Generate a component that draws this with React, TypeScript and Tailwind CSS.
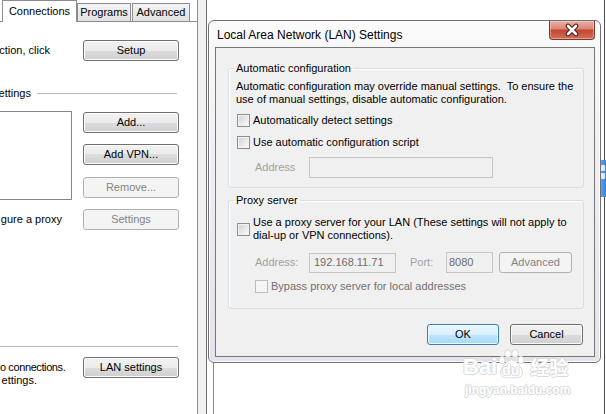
import React from 'react';

// Win7-ish button looks
const btnBase = 'flex items-center justify-center h-[21px] rounded-[3px] border text-[11px] leading-none shrink-0';
const btnOn =
  'border-[#707070] text-black bg-[linear-gradient(#f2f2f2,#ebebeb_50%,#dddddd_50%,#cfcfcf)] shadow-[inset_0_0_0_1px_#fbfbfb]';
const btnOff = 'border-[#adb2b5] text-[#838383] bg-[#f4f4f4]';
const btnDefault =
  'border-[#3c7fb1] text-black bg-[linear-gradient(#eaf6fd,#d9f0fc_50%,#bee6fd_50%,#a7d9f5)] shadow-[inset_0_0_0_1px_#eef8fd]';

const Button: React.FC<{ label: string; kind?: 'on' | 'off' | 'default'; className?: string }> = ({
  label,
  kind = 'on',
  className = '',
}) => {
  const look = kind === 'off' ? btnOff : kind === 'default' ? btnDefault : btnOn;
  return <div className={`${btnBase} ${look} ${className}`}>{label}</div>;
};

const Check: React.FC<{ off?: boolean }> = ({ off }) => (
  <span
    className={
      off
        ? 'block w-[13px] h-[13px] shrink-0 border border-[#bcbcbc] bg-[#f5f5f5]'
        : 'block w-[13px] h-[13px] shrink-0 border border-[#8e8f8f] bg-[linear-gradient(135deg,#d0d0d0,#fdfdfd)] shadow-[inset_0_0_0_1px_#f2f2f2]'
    }
  />
);

const App: React.FC = () => {
  return (
    <div className="relative w-[606px] h-[414px] overflow-hidden bg-white font-['Liberation_Sans',Arial,sans-serif] text-[11px] leading-[13px] text-black">
      {/* background windows */}
      <div className="flex h-full">
        {/* Internet Options (only the right part shows) */}
        <div className="w-[198px] h-full flex flex-col border-r border-[#898c95] bg-white">
          <div className="h-[21px] flex items-end shrink-0">
            <div className="ml-[2px] w-[75px] h-[22px] -mb-px relative z-10 bg-white border-x border-t border-[#898c95] flex items-center justify-center">
              Connections
            </div>
            <div className="w-[54px] h-[18px] border-x border-t border-[#898c95] bg-[linear-gradient(#f4f4f4,#e2e2e2)] flex items-center justify-center">
              Programs
            </div>
            <div className="ml-[1px] w-[58px] h-[18px] border-x border-t border-[#898c95] bg-[linear-gradient(#f4f4f4,#e2e2e2)] flex items-center justify-center">
              Advanced
            </div>
          </div>

          <div className="flex-1 border-t border-[#898c95] flex flex-col">
            <div className="mt-[18px] flex items-center h-[21px]">
              <div className="w-[83px] shrink-0">
                <div className="w-[50px] flex justify-end whitespace-nowrap">ction, click</div>
              </div>
              <Button label="Setup" className="w-[96px]" />
            </div>

            <div className="mt-[25px] h-[14px] flex items-center">
              <div className="w-[31px] flex justify-end whitespace-nowrap">ettings</div>
              <div className="ml-[6px] w-[140px] h-px bg-[#b9b9b9]" />
            </div>

            <div className="mt-[11px] flex">
              <div className="w-[83px] shrink-0">
                <div className="w-[72px] h-[89px] border-y border-r border-[#828790] bg-white" />
              </div>
              <div className="flex flex-col">
                <Button label="Add..." className="mt-[1px] w-[96px]" />
                <Button label="Add VPN..." className="mt-[11px] w-[96px]" />
                <Button label="Remove..." kind="off" className="mt-[12px] w-[96px]" />
              </div>
            </div>

            <div className="mt-[9px] flex items-center h-[21px]">
              <div className="w-[83px] shrink-0">
                <div className="w-[62px] flex justify-end whitespace-nowrap">gure a proxy</div>
              </div>
              <Button label="Settings" kind="off" className="w-[96px]" />
            </div>

            <div className="mt-[116px] w-[178px] h-px bg-[#b9b9b9]" />

            <div className="mt-[10px] flex items-start">
              <div className="w-[83px] shrink-0 pt-[4px]">
                <div className="whitespace-nowrap tracking-[-0.4px]">o connections.</div>
                <div className="w-[37px] flex justify-end whitespace-nowrap">ettings.</div>
              </div>
              <Button label="LAN settings" className="w-[96px]" />
            </div>
          </div>
        </div>
        <div className="w-[9px] h-full bg-[#f0f0f0] border-r border-[#6e6e6e]" />

        {/* window behind the dialog */}
        <div className="flex-1 flex">
          <div className="flex-1 flex flex-col">
            <div className="flex-1" />
            <div className="h-[51px] ml-[6px] border-l border-[#8a8a8a]" />
          </div>
          <div className="w-px bg-[#4d4d4d]" />
          <div className="w-px" />
        </div>
      </div>

      {/* floating side widget */}
      <div className="absolute left-[597px] top-[160px] w-[9px] h-[37px] bg-[linear-gradient(90deg,#7fb3ee,#2f86e4)] flex flex-col items-end pt-[5px] pr-[1px] gap-[2px]">
        <span className="block w-[4px] h-[6px] bg-white/80" />
        <span className="block w-[4px] h-[6px] bg-white/80" />
      </div>

      {/* LAN settings dialog */}
      <div className="absolute left-[208px] top-[20px] w-[393px] h-[343px] rounded-[6px] border border-[#707070] bg-[linear-gradient(#fbfbfb,#f2f0f4_30%,#e6e1ec)] shadow-[inset_0_0_0_1px_#fdfdfd] flex flex-col pl-[6px] pr-[5px] pb-[5px]">
        <div className="h-[26px] shrink-0 flex justify-between">
          <div className="self-center mt-[3px] pl-[2px] text-[12px] leading-[15px]">Local Area Network (LAN) Settings</div>
          <div className="w-[46px] h-[19px] rounded-b-[4px] border border-t-0 border-[#7a3a30] bg-[linear-gradient(#eab1a5,#d98273_45%,#c4452f_50%,#d2705b)] shadow-[inset_0_0_0_1px_rgba(255,220,210,0.45)] flex items-center justify-center">
            <svg width="16" height="14" viewBox="0 0 16 14">
              <path d="M4 3 L12 11 M12 3 L4 11" stroke="#4a1c14" strokeWidth="4.6" strokeLinecap="round" />
              <path d="M4 3 L12 11 M12 3 L4 11" stroke="#ffffff" strokeWidth="2.6" strokeLinecap="round" />
            </svg>
          </div>
        </div>

        <div className="flex-1 border border-[#777777] bg-[#f0f0f0] pl-[12px] pr-[10px] pt-[13px] flex flex-col">
          <fieldset className="border border-[#d5dfe5] rounded-[3px] shadow-[inset_1px_1px_0_#fff] pb-[9px]">
            <legend className="ml-[5px] px-[2px] leading-[15px]">Automatic configuration</legend>
            <p className="mt-[4px] pl-[7px] leading-[13px] whitespace-nowrap">
              Automatic configuration may override manual settings.&nbsp; To ensure the
              <br />
              use of manual settings, disable automatic configuration.
            </p>
            <div className="mt-[8px] pl-[8px] flex items-center gap-[3px]">
              <Check />
              <span>Automatically detect settings</span>
            </div>
            <div className="mt-[9px] pl-[8px] flex items-center gap-[3px]">
              <Check />
              <span>Use automatic configuration script</span>
            </div>
            <div className="mt-[8px] pl-[26px] flex items-center">
              <span className="w-[54px] text-[#a0a0a0]">Address</span>
              <div className="w-[184px] h-[21px] border border-[#c5c5c5] bg-[#f0f0f0]" />
            </div>
          </fieldset>

          <fieldset className="mt-[5px] border border-[#d5dfe5] rounded-[3px] shadow-[inset_1px_1px_0_#fff] pb-[15px]">
            <legend className="ml-[5px] px-[2px] leading-[15px]">Proxy server</legend>
            <div className="mt-[8px] pl-[8px] flex items-center gap-[3px]">
              <Check />
              <span className="whitespace-nowrap">
                Use a proxy server for your LAN (These settings will not apply to
                <br />
                dial-up or VPN connections).
              </span>
            </div>
            <div className="mt-[10px] pl-[26px] flex items-center h-[21px]">
              <span className="w-[54px] text-[#a0a0a0]">Address:</span>
              <div className="w-[87px] h-[20px] border border-[#c5c5c5] bg-[#f0f0f0] pl-[4px] flex items-center text-[#6d6d6d]">
                192.168.11.71
              </div>
              <span className="ml-[14px] w-[36px] text-[#a0a0a0]">Port:</span>
              <div className="w-[47px] h-[21px] border border-[#c5c5c5] bg-[#f0f0f0] pl-[2px] flex items-center text-[#6d6d6d]">
                8080
              </div>
              <Button label="Advanced" kind="off" className="ml-[6px] w-[73px]" />
            </div>
            <div className="mt-[7px] pl-[26px] flex items-center gap-[3px]">
              <Check off />
              <span className="text-[#707070]">Bypass proxy server for local addresses</span>
            </div>
          </fieldset>

          <div className="mt-[15px] pr-[1px] flex justify-end gap-[11px]">
            <Button label="OK" kind="default" className="w-[72px]" />
            <Button label="Cancel" className="w-[73px]" />
          </div>
        </div>
      </div>

      {/* Baidu jingyan watermark */}
      <div className="absolute left-[463px] top-[349px] flex flex-col items-start text-white font-bold [text-shadow:-1px_0_#dadada,1px_0_#dadada,0_-1px_#dadada,0_1px_#dadada]">
        <div className="flex items-end">
          <span className="text-[22px] leading-[24px]">Bai</span>
          <span className="relative block w-[29px] h-[30px]">
            <svg width="29" height="30" viewBox="0 0 29 30">
              <g fill="#ffffff" stroke="#dadada" strokeWidth="1">
                <ellipse cx="5" cy="11" rx="3" ry="3.6" />
                <ellipse cx="11" cy="4.5" rx="3.2" ry="3.8" />
                <ellipse cx="18" cy="4.5" rx="3.2" ry="3.8" />
                <ellipse cx="24" cy="11" rx="3" ry="3.6" />
                <path d="M14.5 11 C9 11 4 19 3.5 24 C3.5 28 7 29 14.5 29 C22 29 25.5 28 25.5 24 C25 19 20 11 14.5 11 Z" />
              </g>
            </svg>
            <span className="absolute left-[5px] bottom-[1px] text-[14px] leading-[15px]">du</span>
          </span>
          <span className="ml-[4px] text-[19px] leading-[24px] font-['Noto_Sans_CJK_SC',sans-serif]">经验</span>
        </div>
        <span className="mt-[5px] ml-[2px] text-[12px] leading-[13px]">jingyan.baidu.com</span>
      </div>
    </div>
  );
};

export default App;
